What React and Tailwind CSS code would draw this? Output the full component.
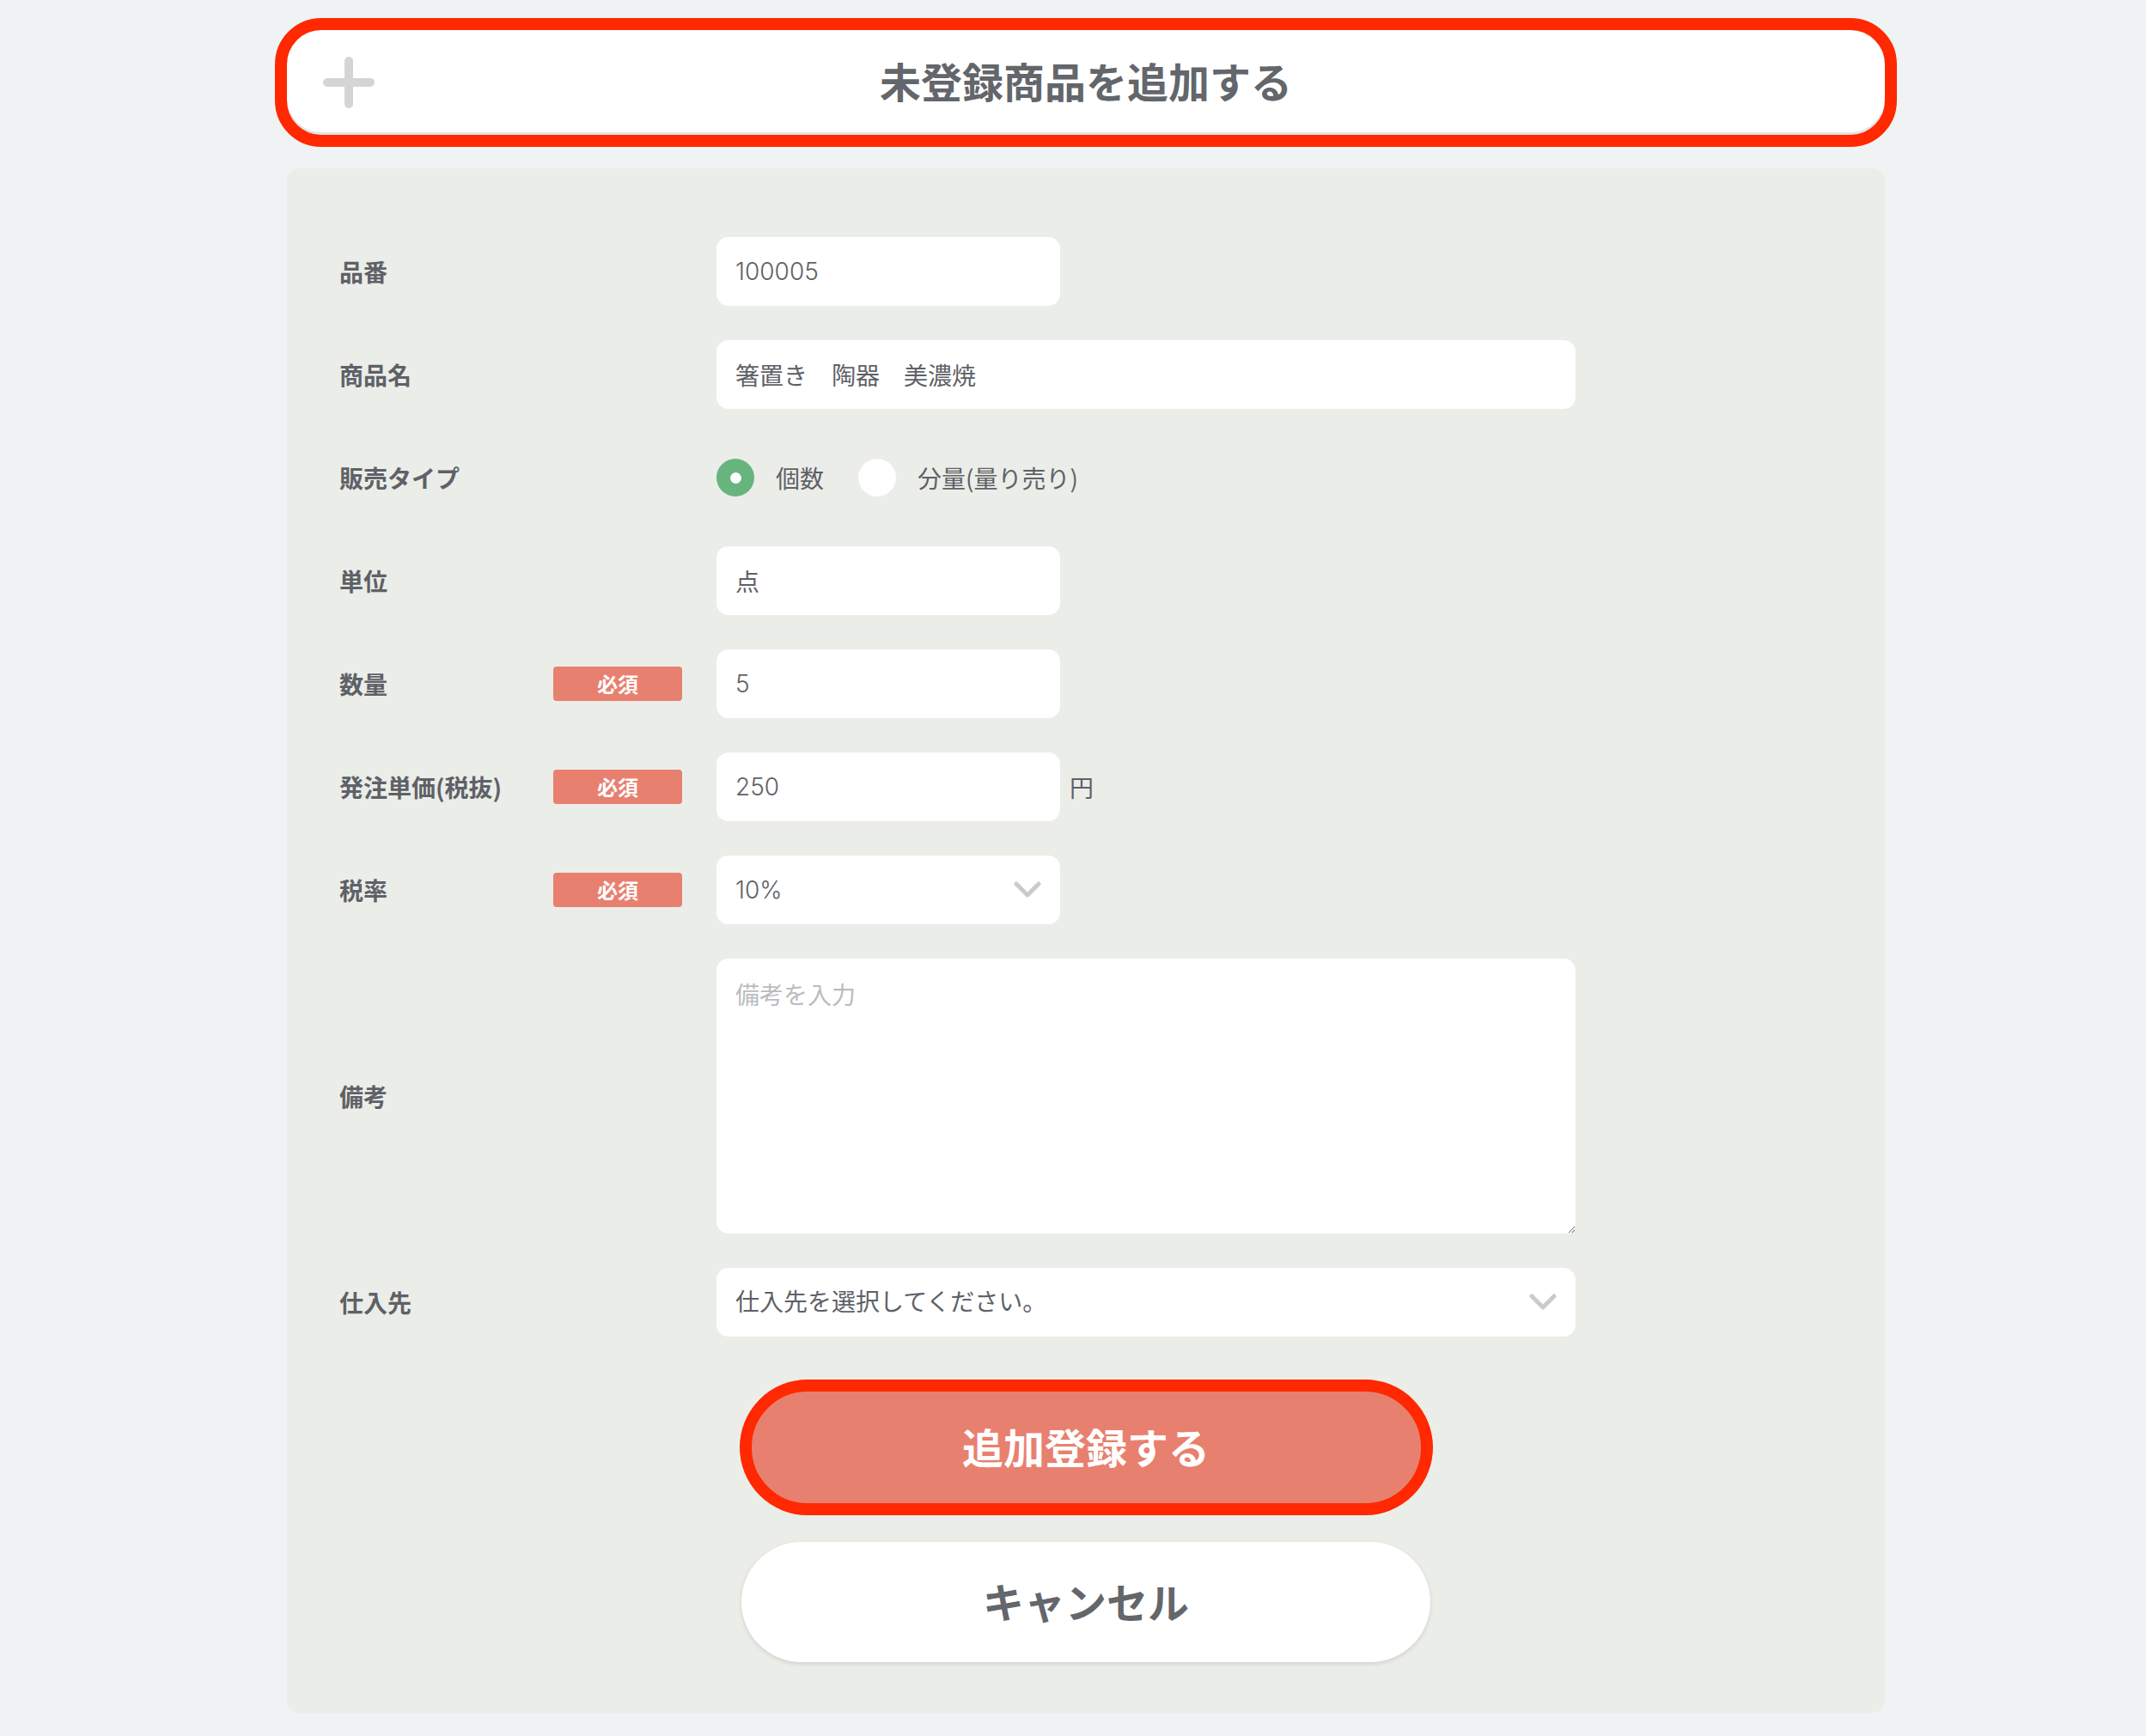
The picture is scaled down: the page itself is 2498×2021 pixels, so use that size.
import React from "react";

const textField =
  "h-[80px] rounded-[14px] bg-white px-[22px] text-[28px] text-[#5e6167] font-['Inter','Noto_Sans_CJK_JP',sans-serif] outline-none";

const Chevron = () => (
  <svg width="32" height="20" viewBox="0 0 32 20" fill="none">
    <polyline
      points="3,3 16,16 29,3"
      stroke="#cbcbcb"
      strokeWidth="5"
      strokeLinecap="round"
      strokeLinejoin="round"
    />
  </svg>
);

const Badge = () => (
  <span className="flex h-[40px] w-[150px] items-center justify-center rounded-[4px] bg-[#e8806f] text-[24px] font-bold text-white">
    必須
  </span>
);

const Row = ({ label, required, children }) => (
  <div className="flex items-center">
    <div className="w-[249px] shrink-0 text-[28px] font-bold text-[#5e6167]">{label}</div>
    <div className="w-[150px] shrink-0">{required && <Badge />}</div>
    <div className="ml-[40px] flex items-center">{children}</div>
  </div>
);

const App = () => {
  return (
    <div className="min-h-screen bg-[#f0f3f3] pb-[28px] pt-[35px] font-['Noto_Sans_CJK_JP',sans-serif]">
      {/* Header */}
      <div className="ml-[334px] w-[1860px]">
        <div className="flex h-[122px] items-center rounded-[40px] bg-white px-[42px] shadow-[inset_0_-3px_0_#e4e4e4] outline-[14px] outline-solid outline-[#ff2800]">
          <svg width="60" height="60" viewBox="0 0 60 60" className="shrink-0">
            <path d="M30 5 V55 M5 30 H55" stroke="#d5d5d5" strokeWidth="10" strokeLinecap="round" />
          </svg>
          <h1 className="flex-1 pb-[6px] text-center text-[48px] font-bold text-[#63666b]">未登録商品を追加する</h1>
          <div className="w-[60px] shrink-0" />
        </div>
      </div>

      {/* Form card */}
      <div className="ml-[334px] mt-[39px] w-[1860px] rounded-[14px] bg-[#ebede8] pb-[59px] pt-[80px]">
        <div className="flex flex-col gap-[40px] pl-[61px]">
          <Row label="品番">
            <input className={`${textField} w-[400px] font-light`} value="100005" readOnly />
          </Row>
          <Row label="商品名">
            <input className={`${textField} w-[1000px]`} value="箸置き　陶器　美濃焼" readOnly />
          </Row>
          <Row label="販売タイプ">
            <div className="flex h-[80px] items-center text-[28px] text-[#5e6167]">
              <span className="flex h-[44px] w-[44px] items-center justify-center rounded-full bg-[#67b47f]">
                <span className="h-[13px] w-[13px] rounded-full bg-white" />
              </span>
              <span className="ml-[25px]">個数</span>
              <span className="ml-[40px] h-[44px] w-[44px] rounded-full bg-white" />
              <span className="ml-[25px]">分量(量り売り)</span>
            </div>
          </Row>
          <Row label="単位">
            <input className={`${textField} w-[400px]`} value="点" readOnly />
          </Row>
          <Row label="数量" required>
            <input className={`${textField} w-[400px] font-light`} value="5" readOnly />
          </Row>
          <Row label="発注単価(税抜)" required>
            <input className={`${textField} w-[400px] font-light`} value="250" readOnly />
            <span className="ml-[11px] text-[28px] text-[#5e6167]">円</span>
          </Row>
          <Row label="税率" required>
            <div className={`${textField} flex w-[400px] items-center justify-between font-light`}>
              <span>10%</span>
              <Chevron />
            </div>
          </Row>
          <Row label="備考">
            <textarea
              className="h-[320px] w-[1000px] rounded-[14px] bg-white px-[22px] pt-[20px] text-[28px] text-[#5e6167] outline-none placeholder:text-[#b9bcbf]"
              placeholder="備考を入力"
            />
          </Row>
          <Row label="仕入先">
            <div className={`${textField} flex w-[1000px] items-center justify-between`}>
              <span>仕入先を選択してください。</span>
              <Chevron />
            </div>
          </Row>
        </div>

        {/* Buttons */}
        <div className="mt-[50px] flex flex-col items-center">
          <button className="flex h-[158px] w-[807px] items-center justify-center rounded-full border-[14px] border-[#ff2800] bg-[#e8806f] pb-[4px] text-[48px] font-bold text-white">
            追加登録する
          </button>
          <button className="mt-[31px] flex h-[140px] w-[802px] items-center justify-center rounded-full bg-white pb-[4px] text-[48px] font-bold text-[#63666b] shadow-[0_2px_5px_rgba(0,0,0,0.12)]">
            キャンセル
          </button>
        </div>
      </div>
    </div>
  );
};

export default App;
